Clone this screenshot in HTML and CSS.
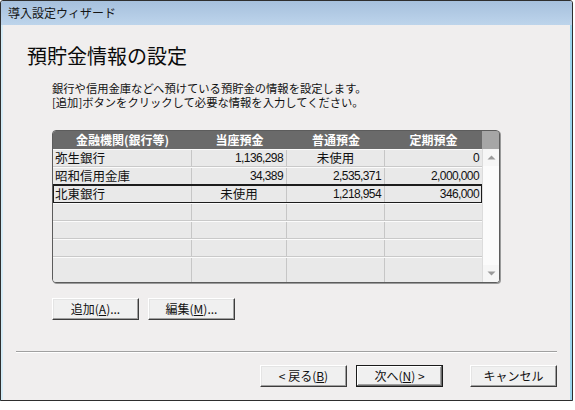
FILE: index.html
```html
<!DOCTYPE html>
<html lang="ja">
<head>
<meta charset="utf-8">
<title>導入設定ウィザード</title>
<link rel="stylesheet" href="styles.css">
</head>
<body>
<div class="window">
  <div class="titlebar">導入設定ウィザード</div>
  <div class="content">
    <h1 class="heading">預貯金情報の設定</h1>
    <p class="desc">銀行や信用金庫などへ預けている預貯金の情報を設定します。<br>[追加]ボタンをクリックして必要な情報を入力してください。</p>

    <div class="table">
      <div class="thead">
        <div class="th">金融機関(銀行等)</div>
        <div class="th">当座預金</div>
        <div class="th">普通預金</div>
        <div class="th">定期預金</div>
        <div class="th th-scroll"></div>
      </div>
      <div class="tbody">
        <div class="rows">
          <div class="row">
            <div class="td name">弥生銀行</div>
            <div class="td num">1,136,298</div>
            <div class="td unused">未使用</div>
            <div class="td num">0</div>
          </div>
          <div class="row">
            <div class="td name">昭和信用金庫</div>
            <div class="td num">34,389</div>
            <div class="td num">2,535,371</div>
            <div class="td num">2,000,000</div>
          </div>
          <div class="row selected">
            <div class="td name">北東銀行</div>
            <div class="td unused">未使用</div>
            <div class="td num">1,218,954</div>
            <div class="td num">346,000</div>
          </div>
          <div class="row"><div class="td"></div><div class="td"></div><div class="td"></div><div class="td"></div></div>
          <div class="row"><div class="td"></div><div class="td"></div><div class="td"></div><div class="td"></div></div>
          <div class="row"><div class="td"></div><div class="td"></div><div class="td"></div><div class="td"></div></div>
          <div class="row last"><div class="td"></div><div class="td"></div><div class="td"></div><div class="td"></div></div>
        </div>
        <div class="scrollbar">
          <div class="sb-btn">
            <svg width="9" height="5" viewBox="0 0 9 5"><polygon points="0.5,4.5 4.5,0.5 8.5,4.5" fill="#9a9a9a"/></svg>
          </div>
          <div class="sb-track"></div>
          <div class="sb-btn">
            <svg width="9" height="5" viewBox="0 0 9 5"><polygon points="0.5,0.5 8.5,0.5 4.5,4.5" fill="#9a9a9a"/></svg>
          </div>
        </div>
      </div>
    </div>

    <div class="actions">
      <button class="btn">追加(<u>A</u>)...</button>
      <button class="btn">編集(<u>M</u>)...</button>
    </div>

    <div class="separator"></div>

    <div class="footer">
      <button class="btn">&lt; 戻る(<u>B</u>)</button>
      <button class="btn default">次へ(<u>N</u>) &gt;</button>
      <button class="btn cancel">キャンセル</button>
    </div>
  </div>
</div>
</body>
</html>
```

FILE: styles.css
```css
html, body {
  margin: 0;
  padding: 0;
  background: #ffffff;
}

body {
  font-family: "Noto Sans CJK JP", "Liberation Sans", sans-serif;
  color: #111;
}

.window {
  width: 573px;
  box-sizing: border-box;
  border: 1px solid #2e2e2e;
  border-radius: 3px 3px 0 0;
  box-shadow: 0 2px 0 #7fcfea;
  background: #f0eeee;
}

.titlebar {
  height: 24px;
  line-height: 24px;
  padding-left: 7px;
  font-size: 12px;
  color: #151515;
  background: linear-gradient(#a6c0dd, #bdd4eb);
  border-radius: 2px 2px 0 0;
}

.content {
  height: 375px;
  box-sizing: border-box;
  border-left: 2px solid #d4ebf6;
  border-right: 2px solid #9ad4ec;
  background: #f0eeee;
  padding-top: 20px;
  display: flex;
  flex-direction: column;
}

.heading {
  margin: 0 0 0 24px;
  font-size: 20px;
  line-height: 22px;
  font-weight: normal;
  color: #0a0a0a;
}

.desc {
  margin: 14px 0 0 49px;
  font-size: 11.3px;
  line-height: 14px;
  color: #111;
}

.table {
  margin: 21px 0 0 49px;
  width: 448px;
  height: 153px;
  box-sizing: border-box;
  border: 1px solid #5c5c5c;
  border-radius: 4px;
  overflow: hidden;
  background: #e9e9e9;
  box-shadow: 1px 1px 0 #9a9a9a;
  display: flex;
  flex-direction: column;
}

.thead {
  display: grid;
  grid-template-columns: 139px 95px 98px 97px 17px;
  height: 18px;
  background: #6a6a6a;
  flex: none;
}

.th {
  color: #ffffff;
  font-weight: bold;
  font-size: 12px;
  line-height: 18px;
  text-align: center;
  white-space: nowrap;
}

.th-scroll {
  background: #a6a6a6;
}

.tbody {
  display: flex;
  flex: 1;
  min-height: 0;
}

.rows {
  width: 429px;
  display: flex;
  flex-direction: column;
}

.row {
  display: grid;
  grid-template-columns: 139px 95px 98px 97px;
  height: 18px;
  box-sizing: border-box;
  border-top: 1px solid #fbfbfb;
  border-bottom: 1px solid #c9c9c9;
  background: #e9e9e9;
}

.row.last {
  flex: 1;
  border-bottom: none;
}

.row.selected {
  outline: 2px solid #1c1c1c;
  outline-offset: -1px;
}

.td {
  border-right: 1px solid #c6c6c6;
  font-size: 12.5px;
  line-height: 16px;
  white-space: nowrap;
}

.td:last-child {
  border-right: none;
}

.name {
  padding-left: 2px;
}

.num {
  text-align: right;
  padding-right: 3px;
  font-family: "Liberation Sans", sans-serif;
  font-size: 12px;
  letter-spacing: -0.6px;
}

.unused {
  text-align: center;
}

.scrollbar {
  width: 17px;
  background: #f4f4f4;
  display: flex;
  flex-direction: column;
  border-left: 1px solid #dcdcdc;
  box-sizing: border-box;
}

.sb-btn {
  height: 17px;
  display: flex;
  align-items: center;
  justify-content: center;
  background: #f6f6f6;
}

.sb-track {
  flex: 1;
  background: #fbfbfb;
}

.actions {
  margin: 15px 0 0 49px;
  display: flex;
  gap: 9px;
}

.btn {
  width: 87px;
  height: 22px;
  box-sizing: border-box;
  padding: 0;
  font-family: "Noto Sans CJK JP", "Liberation Sans", sans-serif;
  font-size: 12px;
  line-height: 18px;
  color: #111;
  background: #f0f0f0;
  border: 1px solid;
  border-color: #ffffff #3c3c3c #3c3c3c #ffffff;
  box-shadow: inset -1px -1px 0 #a0a0a0, inset 1px 1px 0 #e4e4e4;
}

.btn u {
  text-decoration: underline;
  text-underline-offset: 1px;
}

.btn.default {
  border-color: #1a1a1a;
  box-shadow: inset -1px -1px 0 #6a6a6a, inset 1px 1px 0 #ffffff, inset -2px -2px 0 #a0a0a0;
}

.separator {
  margin: 31px 13px 0 13px;
  height: 1px;
  border-top: 1px solid #a0a0a0;
  background: #ffffff;
}

.footer {
  margin: 12px 13px 0 0;
  display: flex;
  justify-content: flex-end;
  gap: 9px;
}

.btn.cancel {
  margin-left: 18px;
}
```
